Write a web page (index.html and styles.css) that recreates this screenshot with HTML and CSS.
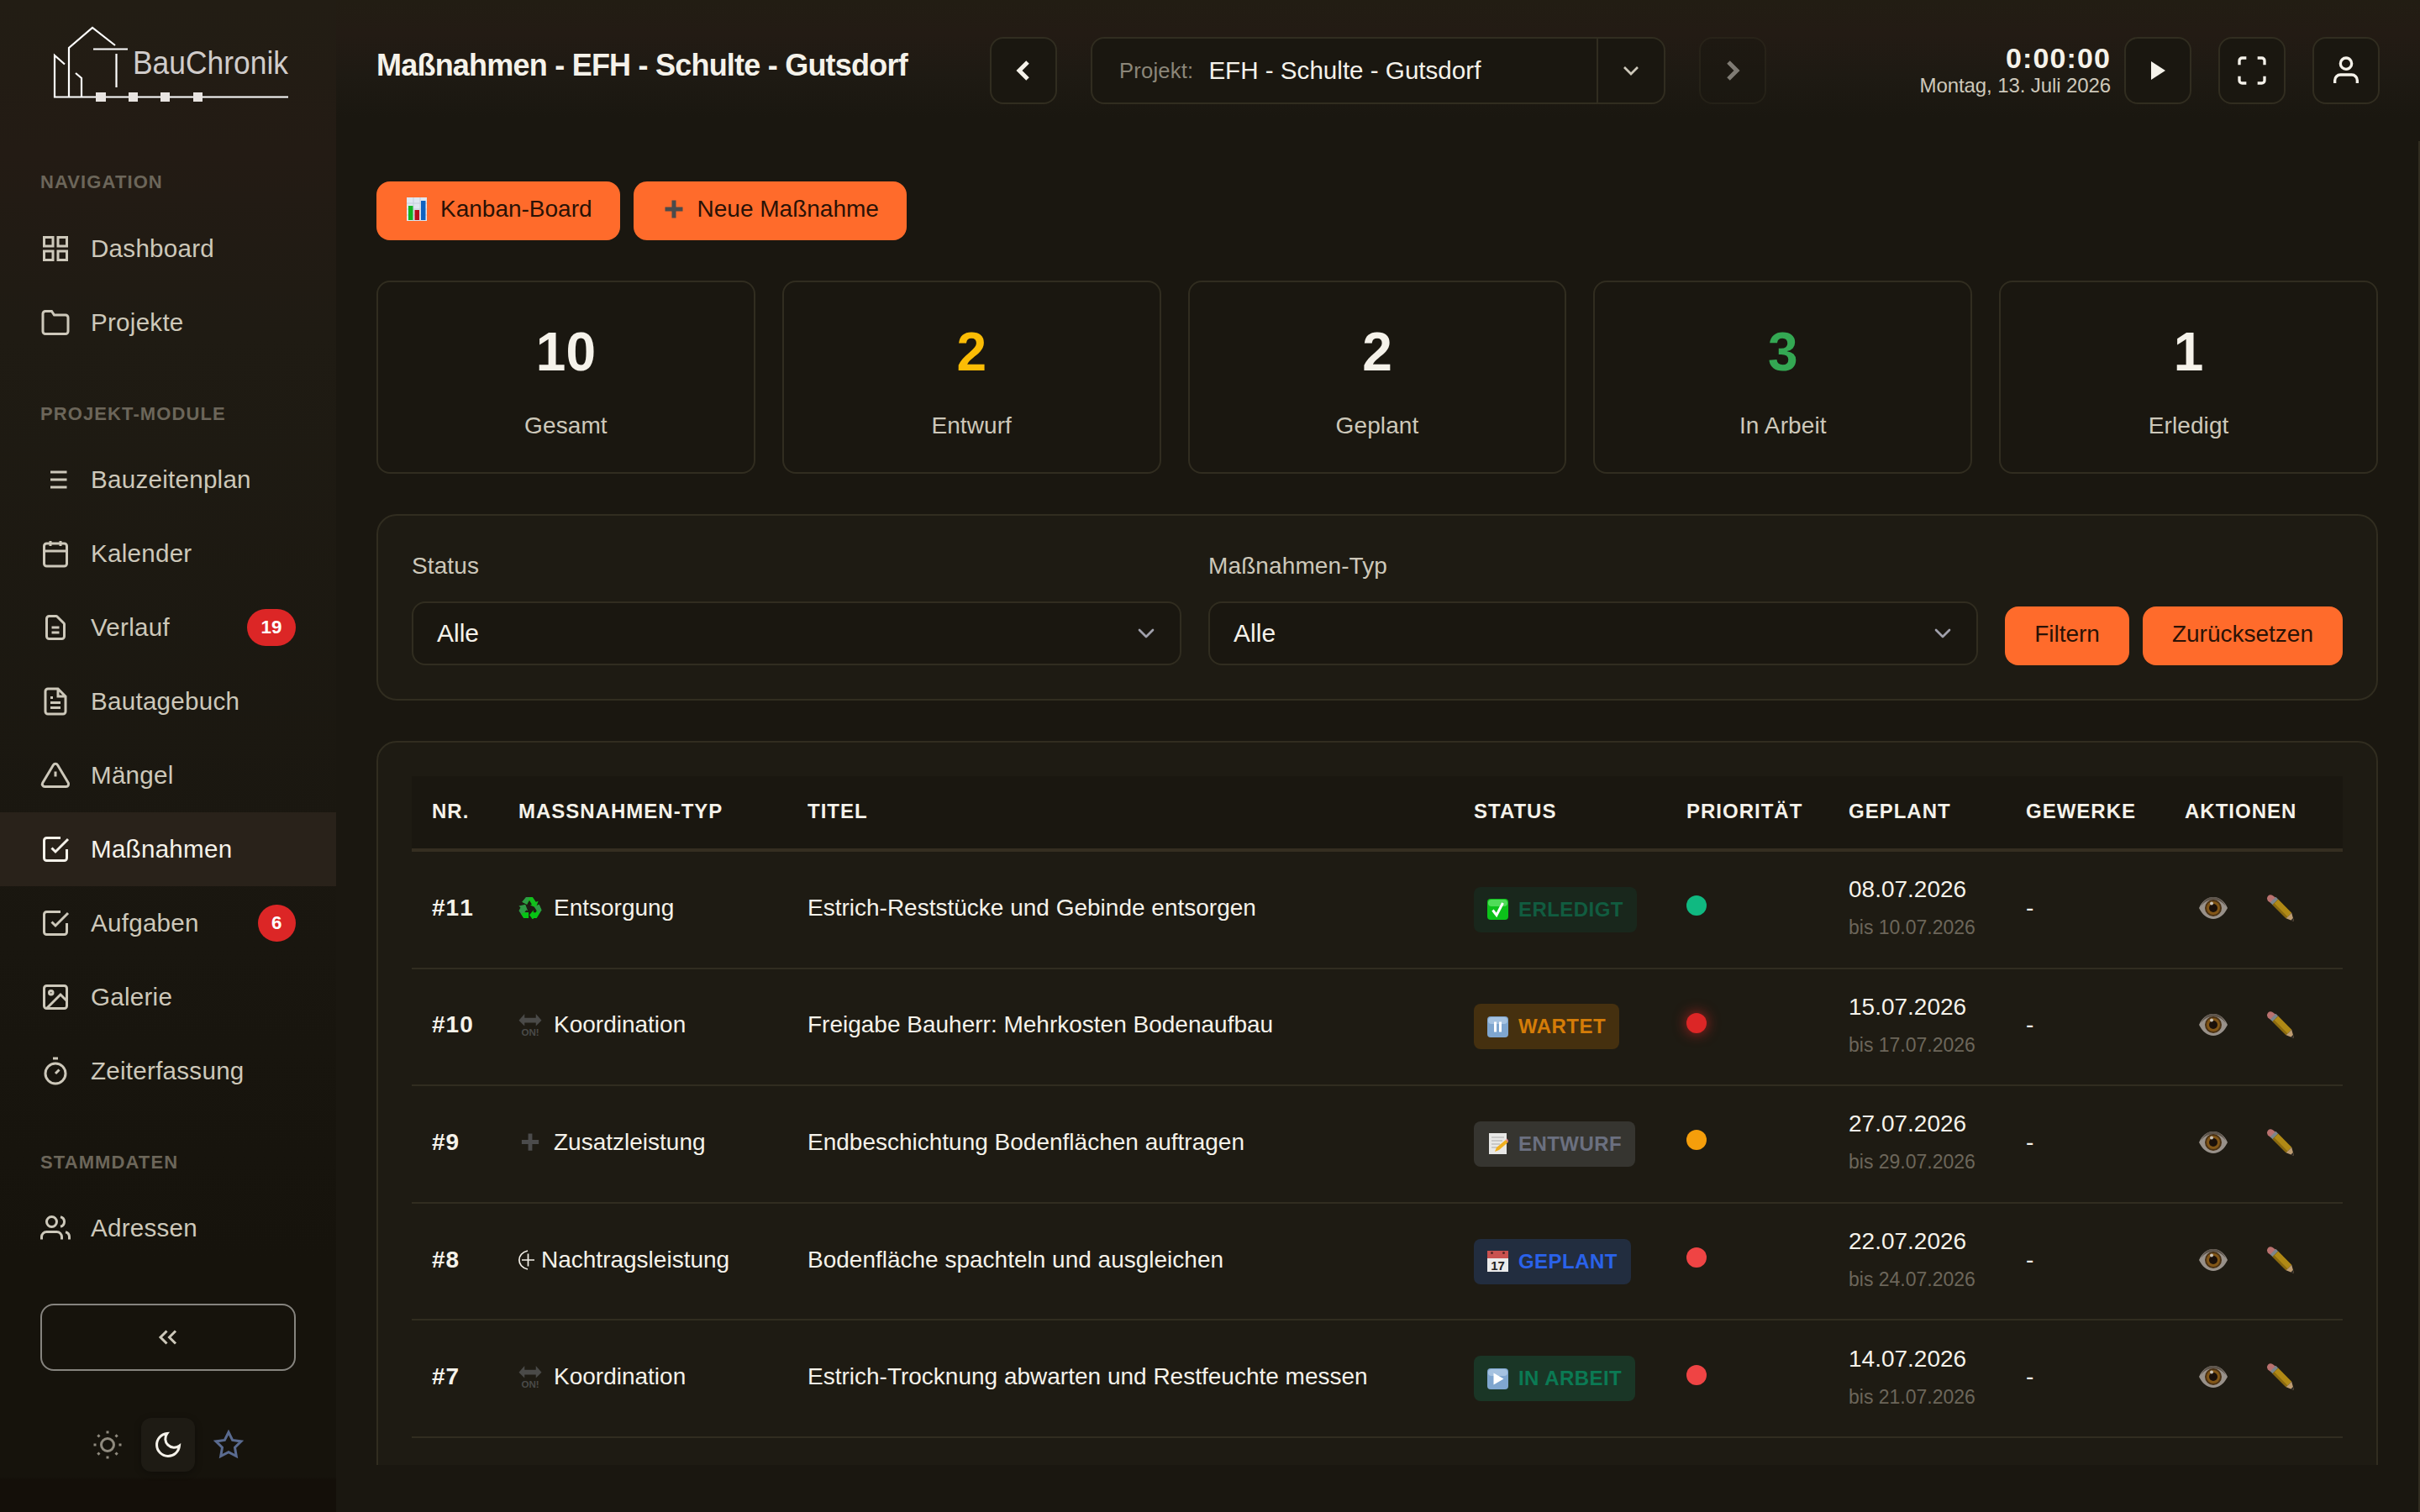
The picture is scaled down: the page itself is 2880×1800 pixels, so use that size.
FILE: index.html
```html
<!DOCTYPE html>
<html lang="de">

<head>
    <meta charset="UTF-8">
    <title>Maßnahmen - EFH - Schulte - Gutsdorf</title>
    <link rel="stylesheet" href="styles.css">
</head>

<body>
    <!-- icon sprite -->
    <svg class="sprite">
        <symbol id="e-chart" viewBox="0 0 28 28">
            <rect x="2" y="0" width="24" height="28" fill="#dfe6f0" />
            <path d="M2 7h24M2 14h24M2 21h24M10 0v28M18 0v28" stroke="#c3cedd" stroke-width="1" />
            <rect x="4" y="10" width="5.5" height="17" fill="#12b422" />
            <rect x="11.5" y="15" width="5.5" height="12" fill="#b80f1c" />
            <rect x="19" y="4" width="5.5" height="23" fill="#0f62c0" />
        </symbol>
        <symbol id="e-plus" viewBox="0 0 28 28">
            <path d="M14 3.5v21M3.5 14h21" stroke="#4b4b4b" stroke-width="5" />
        </symbol>
        <symbol id="e-recycle" viewBox="0 0 28 28">
            <path d="M9 1h8l4 6 3-1-3 8-7-3 2-1-3-5-3 5-6-3z" fill="#12c01c" />
            <path d="M9 1h4l-3 9-6-3z" fill="#2f9a45" />
            <path d="M0 12l8-2 3 8-2-1-2 3h5v7H6l-6-9 2-4z" fill="#2f9a45" />
            <path d="M6 20h6v7H6l-3-5z" fill="#06c414" />
            <path d="M19 13l6-3 3 7-6 10h-4v3l-5-7 5-6v3h3l1-2z" fill="#06c414" />
            <path d="M19 13l6-3 3 7-3 4z" fill="#2f9a45" />
        </symbol>
        <symbol id="e-half" viewBox="0 0 19 24">
            <path d="M11 1C-2.500 4-2.500 20 11 23M4 12h15M11.500 4.500v15" fill="none" stroke="#f5f2ea" stroke-width="1.700" />
        </symbol>
        <symbol id="e-check" viewBox="0 0 25 25">
            <rect width="25" height="25" rx="4" fill="#0cc21a" />
            <rect x="1" y="1" width="23" height="8" rx="4" fill="#4fdc58" />
            <path d="M6.500 13.500l4.500 6L18.500 5" fill="none" stroke="#fff" stroke-width="3" />
        </symbol>
        <symbol id="e-pause" viewBox="0 0 25 25">
            <rect width="25" height="25" rx="4" fill="#7fa6cf" />
            <rect x="1" y="1" width="23" height="8" rx="4" fill="#a5c2e0" />
            <path d="M9.500 6.500v12M15.500 6.500v12" stroke="#fff" stroke-width="3" />
        </symbol>
        <symbol id="e-play" viewBox="0 0 25 25">
            <rect width="25" height="25" rx="4" fill="#7fa6cf" />
            <rect x="1" y="1" width="23" height="8" rx="4" fill="#a5c2e0" />
            <path d="M7.500 5.500v14l12-7z" fill="#fff" />
        </symbol>
        <symbol id="e-memo" viewBox="0 0 25 25">
            <rect x="2" y="0" width="21" height="25" fill="#e8e8e6" />
            <path d="M5 5h15M5 9h13M5 13h10M5 17h7" stroke="#a9a9a9" stroke-width="1" />
            <path d="M9 22l2-5L22 8l2.500 3L14 20z" fill="#f0b020" />
            <path d="M22 8l1.500-1.500 2 3L24.500 11z" fill="#e58a88" />
        </symbol>
        <symbol id="e-eye" viewBox="0 0 36 28">
            <path d="M1 14C5 5 11 1 18 1s13 4 17 13c-4 8-10 13-17 13S5 22 1 14z" fill="#98918a" />
            <path d="M3 12C7 4 12 1 18 1s11 3 15 11C28 6 24 4.500 18 4.500S8 6 3 12z" fill="#5d544b" />
            <circle cx="18" cy="14" r="10" fill="#4a3113" />
            <circle cx="18" cy="14" r="8" fill="#825617" />
            <circle cx="18" cy="14" r="5" fill="#1a100a" />
            <circle cx="16" cy="8.500" r="2" fill="#c9c2b8" />
        </symbol>
        <symbol id="e-pencil" viewBox="0 0 36 36">
            <path d="M1 6c0-4 4-6 7-4l4 3-6 7-4-3z" fill="#b9716f" />
            <path d="M5 11l7-7 3 3-7 7z" fill="#7c868c" />
            <path d="M8 14l7-7 17 17-7 7z" fill="#b08915" />
            <path d="M8 14l2-2 17 17-2 2z" fill="#8b6a10" />
            <path d="M25 31l7-7 3 11z" fill="#bd9c72" />
            <path d="M31 33.500l2.700-2.700L35 35z" fill="#2c2824" />
        </symbol>
        <symbol id="i-check" viewBox="0 0 24 24">
            <path d="M9 11l3 3L22 4M21 12v7a2 2 0 0 1-2 2H5a2 2 0 0 1-2-2V5a2 2 0 0 1 2-2h11" />
        </symbol>
        <symbol id="i-down" viewBox="0 0 24 24">
            <path d="M6 9l6 6 6-6" />
        </symbol>
    </svg>

    <aside class="sidebar">
        <div class="logo">
            <svg width="400" height="153" viewBox="0 0 400 153">
                <g fill="none" stroke="#fff" stroke-width="2.200">
                    <path d="M77 76.500L65 66v49.500h278" />
                    <path d="M82 115V57l28-24 27 21" />
                    <path d="M111 58.500h41M138.500 64v40M90 87l7 6v22" />
                </g>
                <path d="M114 110h12v11h-12zM153 110h11v11h-11zM191 110h11v11h-11zM230 110h11v11h-11z" fill="#e8e4e1" />
                <text x="158" y="88" textLength="185" lengthAdjust="spacingAndGlyphs" class="logo-text">BauChronik</text>
            </svg>
        </div>
        <nav>
            <div class="nav-label">Navigation</div>
            <a class="nav-item">
                <svg class="icon" viewBox="0 0 24 24"><path d="M3 3h7v7H3zM14 3h7v7h-7zM14 14h7v7h-7zM3 14h7v7H3z" /></svg>
                <span>Dashboard</span>
            </a>
            <a class="nav-item">
                <svg class="icon" viewBox="0 0 24 24"><path d="M22 19a2 2 0 0 1-2 2H4a2 2 0 0 1-2-2V5a2 2 0 0 1 2-2h5l2 3h9a2 2 0 0 1 2 2z" /></svg>
                <span>Projekte</span>
            </a>
            <div class="nav-label">Projekt-Module</div>
            <a class="nav-item">
                <svg class="icon" viewBox="0 0 24 24"><path d="M8 6h13M8 12h13M8 18h13" /></svg>
                <span>Bauzeitenplan</span>
            </a>
            <a class="nav-item">
                <svg class="icon" viewBox="0 0 24 24"><rect x="3" y="4" width="18" height="18" rx="2" /><path d="M16 2v4M8 2v4M3 10h18" /></svg>
                <span>Kalender</span>
            </a>
            <a class="nav-item">
                <svg class="icon" viewBox="0 0 24 24"><path d="M9 12h6M9 16h6M17 21H7a2 2 0 0 1-2-2V5a2 2 0 0 1 2-2h5.600a1 1 0 0 1 .7.3l5.400 5.400a1 1 0 0 1 .3.7V19a2 2 0 0 1-2 2z" /></svg>
                <span>Verlauf</span>
                <b class="count">19</b>
            </a>
            <a class="nav-item">
                <svg class="icon" viewBox="0 0 24 24"><path d="M14 2H6a2 2 0 0 0-2 2v16a2 2 0 0 0 2 2h12a2 2 0 0 0 2-2V8zM14 2v6h6M16 13H8M16 17H8M10 9H8" /></svg>
                <span>Bautagebuch</span>
            </a>
            <a class="nav-item">
                <svg class="icon" viewBox="0 0 24 24"><path d="M10.290 3.860L1.820 18a2 2 0 0 0 1.710 3h16.940a2 2 0 0 0 1.710-3L13.710 3.860a2 2 0 0 0-3.420 0zM12 9v4" /></svg>
                <span>Mängel</span>
            </a>
            <a class="nav-item active">
                <svg class="icon"><use href="#i-check" /></svg>
                <span>Maßnahmen</span>
            </a>
            <a class="nav-item">
                <svg class="icon"><use href="#i-check" /></svg>
                <span>Aufgaben</span>
                <b class="count">6</b>
            </a>
            <a class="nav-item">
                <svg class="icon" viewBox="0 0 24 24"><rect x="3" y="3" width="18" height="18" rx="2" /><circle cx="8.500" cy="8.500" r="1.500" /><path d="M21 15l-5-5L5 21" /></svg>
                <span>Galerie</span>
            </a>
            <a class="nav-item">
                <svg class="icon" viewBox="0 0 24 24"><circle cx="12" cy="14" r="8" /><path d="M10 2h4M12 14l3-3" /></svg>
                <span>Zeiterfassung</span>
            </a>
            <div class="nav-label">Stammdaten</div>
            <a class="nav-item">
                <svg class="icon" viewBox="0 0 24 24"><path d="M17 21v-2a4 4 0 0 0-4-4H5a4 4 0 0 0-4 4v2M23 21v-2a4 4 0 0 0-3-3.870M16 3.130a4 4 0 0 1 0 7.750" /><circle cx="9" cy="7" r="4" /></svg>
                <span>Adressen</span>
            </a>
        </nav>
        <button class="collapse">
            <svg class="icon" viewBox="0 0 24 24"><path d="M11 17l-5-5 5-5M18 17l-5-5 5-5" /></svg>
        </button>
        <div class="themes">
            <button class="theme sun">
                <svg class="icon" viewBox="0 0 24 24"><circle cx="12" cy="12" r="5" /><path d="M12 1v2M12 21v2M4.220 4.220l1.420 1.420M18.360 18.360l1.420 1.420M1 12h2M21 12h2M4.220 19.780l1.420-1.420M18.360 5.640l1.420-1.420" /></svg>
            </button>
            <button class="theme moon">
                <svg class="icon" viewBox="0 0 24 24"><path d="M21 12.790A9 9 0 1 1 11.210 3 7 7 0 0 0 21 12.790z" /></svg>
            </button>
            <button class="theme star">
                <svg class="icon" viewBox="0 0 24 24"><path d="M12 2l3.090 6.260L22 9.270l-5 4.870 1.180 6.880L12 17.770l-6.180 3.250L7 14.140 2 9.270l6.910-1.010z" /></svg>
            </button>
        </div>
    </aside>

    <div class="page">
        <header>
            <h1>Maßnahmen - EFH - Schulte - Gutsdorf</h1>
            <div class="switcher">
                <button class="square"><svg class="icon big bold" viewBox="0 0 24 24"><path d="M15 18l-6-6 6-6" /></svg></button>
                <div class="project">
                    <span class="project-label">Projekt:</span>
                    <span class="project-name">EFH - Schulte - Gutsdorf</span>
                    <span class="project-arrow"><svg class="icon small"><use href="#i-down" /></svg></span>
                </div>
                <button class="square disabled"><svg class="icon big bold" viewBox="0 0 24 24"><path d="M9 18l6-6-6-6" /></svg></button>
            </div>
            <div class="tools">
                <div class="clock">
                    <div class="time">0:00:00</div>
                    <div class="date">Montag, 13. Juli 2026</div>
                </div>
                <button class="square"><svg width="17" height="22" viewBox="0 0 17 22"><path d="M0 0l17 11L0 22z" fill="#f5f2ea" /></svg></button>
                <button class="square"><svg class="icon big" viewBox="0 0 24 24"><path d="M8 3H5a2 2 0 0 0-2 2v3M21 8V5a2 2 0 0 0-2-2h-3M16 21h3a2 2 0 0 0 2-2v-3M3 16v3a2 2 0 0 0 2 2h3" /></svg></button>
                <button class="square"><svg class="icon big" viewBox="0 0 24 24"><path d="M20 21v-2a4 4 0 0 0-4-4H8a4 4 0 0 0-4 4v2" /><circle cx="12" cy="7" r="4" /></svg></button>
            </div>
        </header>

        <main>
            <div class="content">
                <div class="actions">
                    <button class="btn"><svg class="emoji"><use href="#e-chart" /></svg>Kanban-Board</button>
                    <button class="btn"><svg class="emoji"><use href="#e-plus" /></svg>Neue Maßnahme</button>
                </div>

                <div class="stats">
                    <div class="stat"><b>10</b><span>Gesamt</span></div>
                    <div class="stat yellow"><b>2</b><span>Entwurf</span></div>
                    <div class="stat"><b>2</b><span>Geplant</span></div>
                    <div class="stat green"><b>3</b><span>In Arbeit</span></div>
                    <div class="stat"><b>1</b><span>Erledigt</span></div>
                </div>

                <div class="card filter">
                    <div class="field">
                        <label>Status</label>
                        <div class="select">Alle<svg class="icon small"><use href="#i-down" /></svg></div>
                    </div>
                    <div class="field">
                        <label>Maßnahmen-Typ</label>
                        <div class="select">Alle<svg class="icon small"><use href="#i-down" /></svg></div>
                    </div>
                    <div class="actions">
                        <button class="btn plain">Filtern</button>
                        <button class="btn plain">Zurücksetzen</button>
                    </div>
                </div>

                <div class="card list">
                    <table>
                        <thead>
                            <tr>
                                <th class="c-nr">Nr.</th>
                                <th class="c-type">Massnahmen-Typ</th>
                                <th class="c-title">Titel</th>
                                <th class="c-status">Status</th>
                                <th class="c-prio">Priorität</th>
                                <th class="c-date">Geplant</th>
                                <th class="c-trade">Gewerke</th>
                                <th class="c-act">Aktionen</th>
                            </tr>
                        </thead>
                        <tbody>
                            <tr>
                                <td class="nr">#11</td>
                                <td><div class="type"><svg class="emoji"><use href="#e-recycle" /></svg>Entsorgung</div></td>
                                <td>Estrich-Reststücke und Gebinde entsorgen</td>
                                <td class="status"><span class="badge done"><svg><use href="#e-check" /></svg>Erledigt</span></td>
                                <td class="prio"><i class="dot low"></i></td>
                                <td>08.07.2026<small>bis 10.07.2026</small></td>
                                <td>-</td>
                                <td><div class="act"><svg><use href="#e-eye" /></svg><svg><use href="#e-pencil" /></svg></div></td>
                            </tr>
                            <tr>
                                <td class="nr">#10</td>
                                <td><div class="type"><svg class="emoji" viewBox="0 0 28 28"><path d="M0 8l7-8v5h14V0l7 8-7 7v-4H7v4z" fill="#4a4a48" /><text x="14" y="27" text-anchor="middle" class="on-text">ON!</text></svg>Koordination</div></td>
                                <td>Freigabe Bauherr: Mehrkosten Bodenaufbau</td>
                                <td class="status"><span class="badge wait"><svg><use href="#e-pause" /></svg>Wartet</span></td>
                                <td class="prio"><i class="dot critical"></i></td>
                                <td>15.07.2026<small>bis 17.07.2026</small></td>
                                <td>-</td>
                                <td><div class="act"><svg><use href="#e-eye" /></svg><svg><use href="#e-pencil" /></svg></div></td>
                            </tr>
                            <tr>
                                <td class="nr">#9</td>
                                <td><div class="type"><svg class="emoji"><use href="#e-plus" /></svg>Zusatzleistung</div></td>
                                <td>Endbeschichtung Bodenflächen auftragen</td>
                                <td class="status"><span class="badge draft"><svg><use href="#e-memo" /></svg>Entwurf</span></td>
                                <td class="prio"><i class="dot mid"></i></td>
                                <td>27.07.2026<small>bis 29.07.2026</small></td>
                                <td>-</td>
                                <td><div class="act"><svg><use href="#e-eye" /></svg><svg><use href="#e-pencil" /></svg></div></td>
                            </tr>
                            <tr>
                                <td class="nr">#8</td>
                                <td><div class="type"><svg class="half"><use href="#e-half" /></svg>Nachtragsleistung</div></td>
                                <td>Bodenfläche spachteln und ausgleichen</td>
                                <td class="status">
                                    <span class="badge planned">
                                        <svg viewBox="0 0 25 25">
                                            <rect width="25" height="25" fill="#ebebeb" />
                                            <rect width="25" height="9" fill="#c9514f" />
                                            <circle cx="5.500" cy="2.500" r="1.500" fill="#5a2524" />
                                            <circle cx="19.500" cy="2.500" r="1.500" fill="#5a2524" />
                                            <text x="12.500" y="22.500" text-anchor="middle" class="cal-text">17</text>
                                        </svg>Geplant</span>
                                </td>
                                <td class="prio"><i class="dot high"></i></td>
                                <td>22.07.2026<small>bis 24.07.2026</small></td>
                                <td>-</td>
                                <td><div class="act"><svg><use href="#e-eye" /></svg><svg><use href="#e-pencil" /></svg></div></td>
                            </tr>
                            <tr>
                                <td class="nr">#7</td>
                                <td><div class="type"><svg class="emoji" viewBox="0 0 28 28"><path d="M0 8l7-8v5h14V0l7 8-7 7v-4H7v4z" fill="#4a4a48" /><text x="14" y="27" text-anchor="middle" class="on-text">ON!</text></svg>Koordination</div></td>
                                <td>Estrich-Trocknung abwarten und Restfeuchte messen</td>
                                <td class="status"><span class="badge work"><svg><use href="#e-play" /></svg>In Arbeit</span></td>
                                <td class="prio"><i class="dot high"></i></td>
                                <td>14.07.2026<small>bis 21.07.2026</small></td>
                                <td>-</td>
                                <td><div class="act"><svg><use href="#e-eye" /></svg><svg><use href="#e-pencil" /></svg></div></td>
                            </tr>
                        </tbody>
                    </table>
                </div>
            </div>
        </main>
    </div>
</body>

</html>
```
FILE: styles.css
```css
* {
    box-sizing: border-box;
}

body {
    margin: 0;
    width: 2880px;
    height: 1800px;
    overflow: hidden;
    display: flex;
    background: #1a1710;
    color: #f5f2ea;
    font-family: "Liberation Sans", Arial, sans-serif;
    font-size: 28px;
}

button {
    font: inherit;
    color: inherit;
    background: none;
    border: none;
    padding: 0;
    display: flex;
    align-items: center;
    justify-content: center;
}

svg {
    display: block;
    flex: none;
}

.sprite {
    display: none;
}

.icon {
    width: 36px;
    height: 36px;
    fill: none;
    stroke: currentColor;
    stroke-width: 2;
}

.icon.big {
    width: 40px;
    height: 40px;
}

.icon.small {
    width: 32px;
    height: 32px;
}

.icon.bold {
    stroke-width: 3;
}

.emoji {
    width: 28px;
    height: 28px;
}

.on-text {
    font-size: 12px;
    font-weight: bold;
    fill: #4a4a48;
}

.cal-text {
    font-size: 15px;
    letter-spacing: 0;
    fill: #222;
}

/* sidebar */
.sidebar {
    width: 400px;
    flex: none;
    background: linear-gradient(#221d14, #231b14 180px, #1f1b13 400px, #1a1710 1000px, #16130c 1500px, #16130c 1758px, #140f09 1762px);
    color: #cdc8ba;
}

.logo-text {
    font-size: 38px;
    fill: #d0cccb;
}

.nav-label {
    height: 99px;
    padding: 52px 0 0 48px;
    line-height: 25px;
    font-size: 22px;
    font-weight: bold;
    letter-spacing: 1.1px;
    text-transform: uppercase;
    color: #6c665a;
}

.nav-label:first-child {
    padding-top: 51px;
}

.nav-item {
    height: 88px;
    padding: 0 48px;
    display: flex;
    align-items: center;
    font-size: 29.6px;
    letter-spacing: 0.25px;
}

.nav-item span {
    margin-left: 24px;
    flex: 1;
}

.nav-item.active {
    background: #29221a;
    color: #f5f2ea;
}

.count {
    height: 44px;
    line-height: 44px;
    padding: 0 16.5px;
    border-radius: 22px;
    background: #dc2626;
    color: #fff;
    font-size: 22.4px;
    letter-spacing: 0;
}

.collapse {
    width: 304px;
    height: 80px;
    margin: 46px 48px 0;
    border: 2px solid #86847f;
    border-radius: 16px;
}

.themes {
    margin-top: 56px;
    display: flex;
    justify-content: center;
    gap: 8px;
}

.theme {
    width: 64px;
    height: 64px;
    border-radius: 12px;
}

.sun {
    color: #8f8a7e;
}

.moon {
    background: #1e1b14;
    color: #f5f2ea;
    box-shadow: 0 2px 8px rgba(0, 0, 0, 0.3);
}

.star {
    color: #5a6b90;
}

/* header */
.page {
    flex: 1;
    min-width: 0;
    display: flex;
    flex-direction: column;
}

header {
    height: 168px;
    padding: 0 48px;
    display: flex;
    align-items: center;
    background: linear-gradient(#221d13, #231b14 40px, #1e1a13 90px, #1a1710 140px);
}

h1 {
    width: 730px;
    margin: -12px 0 0;
    font-size: 36px;
    letter-spacing: -0.78px;
}

.switcher {
    display: flex;
    gap: 40px;
}

.square {
    width: 80px;
    height: 80px;
    border: 2px solid #312d20;
    border-radius: 16px;
    background: #1a1710;
}

.square.disabled {
    opacity: 0.45;
}

.project {
    width: 684px;
    height: 80px;
    display: flex;
    align-items: center;
    border: 2px solid #312d20;
    border-radius: 16px;
    background: #1a1710;
}

.project-label {
    margin-left: 32px;
    font-size: 25.6px;
    letter-spacing: 0.2px;
    color: #8b8679;
}

.project-name {
    flex: 1;
    margin-left: 18px;
    font-size: 29.6px;
}

.project-arrow {
    width: 80px;
    height: 76px;
    display: flex;
    align-items: center;
    justify-content: center;
    border-left: 2px solid #312d20;
    color: #cdc8ba;
}

.tools {
    margin-left: auto;
    display: flex;
    align-items: center;
    gap: 32px;
}

.clock {
    margin: 2px -16px 0 0;
    text-align: right;
}

.time {
    line-height: 34px;
    font-size: 34px;
    font-weight: bold;
    letter-spacing: 1.1px;
}

.date {
    line-height: 32px;
    font-size: 24px;
    letter-spacing: -0.1px;
    color: #cdc8ba;
}

/* content */
main {
    flex: 1;
    min-height: 0;
    padding: 48px 48px 56px;
    border-right: 2px solid #312d20;
}

.content {
    height: 100%;
    overflow: hidden;
    display: flex;
    flex-direction: column;
    gap: 48px;
}

.content > * {
    flex: none;
}

.actions {
    display: flex;
    gap: 16px;
}

.btn {
    height: 70px;
    padding: 0 33px 5px 34px;
    border-radius: 16px;
    background: #ff6b2b;
    color: #2a1206;
}

.btn .emoji {
    margin-right: 14px;
}

.btn.plain {
    padding: 0 35px 5px;
}

.stats {
    display: grid;
    grid-template-columns: repeat(5, 1fr);
    gap: 32px;
}

.stat {
    height: 230px;
    padding-top: 51px;
    display: flex;
    flex-direction: column;
    align-items: center;
    gap: 41px;
    border: 2px solid #312d20;
    border-radius: 16px;
}

.stat b {
    font-size: 64px;
    line-height: 64px;
}

.stat span {
    font-size: 28px;
    line-height: 30px;
    letter-spacing: 0.1px;
    color: #cdc8ba;
}

.yellow b {
    color: #fbbc05;
}

.green b {
    color: #34a853;
}

.card {
    padding: 40px;
    border: 2px solid #312d20;
    border-radius: 24px;
    background: #1e1b13;
}

.filter {
    display: flex;
    align-items: flex-end;
    gap: 32px;
}

.field {
    flex: 1;
}

.field label {
    display: block;
    margin-bottom: 22px;
    line-height: 40px;
    font-size: 28px;
    letter-spacing: 0.1px;
    color: #cdc8ba;
}

.select {
    height: 76px;
    padding: 0 24px 0 28px;
    display: flex;
    align-items: center;
    justify-content: space-between;
    border: 2px solid #312d20;
    border-radius: 16px;
    background: #1a1710;
    font-size: 30px;
}

.select .icon {
    color: #a0a0ab;
    stroke-linecap: round;
    stroke-linejoin: round;
}

/* table */
.list {
    height: 1100px;
}

table {
    width: 100%;
    table-layout: fixed;
    border-collapse: separate;
    border-spacing: 0;
}

th {
    height: 90px;
    padding: 0 0 3px 24px;
    background: #1a1710;
    border-bottom: 4px solid #352e21;
    text-align: left;
    text-transform: uppercase;
    font-size: 24px;
    letter-spacing: 1px;
}

td {
    height: 139.6px;
    padding: 0 0 4px 24px;
    border-bottom: 2px solid #312d20;
    white-space: nowrap;
}

.c-nr { width: 103px; }
.c-type { width: 344px; }
.c-title { width: 793px; }
.c-status { width: 253px; }
.c-prio { width: 193px; }
.c-date { width: 211px; }
.c-trade { width: 189px; }

.nr {
    font-weight: bold;
    font-kerning: none;
    letter-spacing: 1px;
}

td small {
    display: block;
    margin-top: 16px;
    font-size: 23px;
    color: #6c665a;
}

.type {
    display: flex;
    align-items: center;
}

.type .emoji {
    margin-right: 14px;
    height: 27px;
}

.half {
    width: 19px;
    height: 24px;
    margin-right: 8px;
}

td.status {
    padding-bottom: 0;
}

.badge {
    width: fit-content;
    height: 54px;
    padding: 0 16px;
    display: flex;
    align-items: center;
    border-radius: 8px;
    text-transform: uppercase;
    font-size: 24px;
    font-weight: bold;
    letter-spacing: 0.45px;
}

.badge svg {
    width: 25px;
    height: 25px;
    margin-right: 12px;
}

.done { background: #19271c; color: #115c40; }
.wait { background: #45300f; color: #d47c08; }
.draft { background: #363530; color: #6b7080; }
.planned { background: #222d3f; color: #2a62ea; }
.work { background: #1a3626; color: #0b7a54; }

td.prio {
    padding-bottom: 9px;
}

.dot {
    display: block;
    width: 24px;
    height: 24px;
    border-radius: 50%;
}

.low { background: #10b981; }
.mid { background: #f59e0b; }
.high { background: #ef4444; }
.critical {
    background: #dc2626;
    box-shadow: 0 0 16px rgba(220, 38, 38, 0.75);
}

.act {
    padding-left: 16px;
    display: flex;
    align-items: center;
    gap: 44px;
}

.act svg {
    width: 36px;
    height: 34px;
}

.act svg:first-child {
    height: 28px;
}
```
